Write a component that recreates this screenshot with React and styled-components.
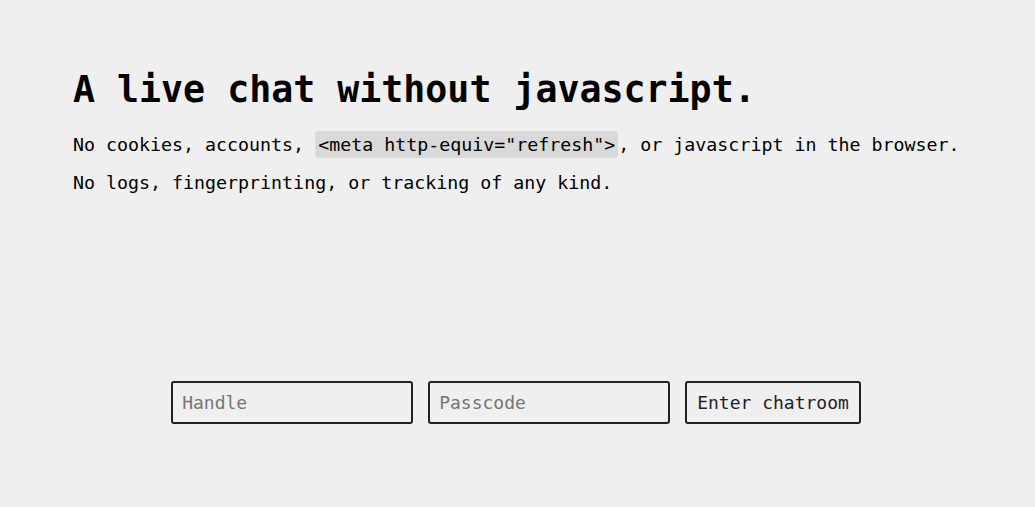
import React from "react";
import styled, { createGlobalStyle } from "styled-components";

const GlobalStyle = createGlobalStyle`
  html, body {
    margin: 0;
    padding: 0;
    background: #efefef;
  }
  body {
    font-family: "DejaVu Sans Mono", monospace;
    color: #000;
  }
`;

const App = () => {
  return (
    <>
      <GlobalStyle />
      <Page>
        <Intro>
          <Title>A live chat without javascript.</Title>
          <Text>
            No cookies, accounts, <Code>&lt;meta http-equiv="refresh"&gt;</Code>, or
            javascript in the browser.
          </Text>
          <Text>No logs, fingerprinting, or tracking of any kind.</Text>
        </Intro>
        <Form onSubmit={(e) => e.preventDefault()}>
          <Input type="text" placeholder="Handle" />
          <Input type="password" placeholder="Passcode" />
          <Button type="submit">Enter chatroom</Button>
        </Form>
      </Page>
    </>
  );
};

const Page = styled.div`
  width: 1035px;
  height: 507px;
  box-sizing: border-box;
  padding: 68px 0 0 73px;
`;

const Intro = styled.div`
  display: flex;
  flex-direction: column;
`;

const Title = styled.h1`
  margin: 0 0 14px;
  font-size: 36.6px;
  font-weight: bold;
  line-height: 44px;
`;

const Text = styled.p`
  margin: 0;
  font-size: 18.3px;
  line-height: 38px;
`;

const Code = styled.code`
  font-family: inherit;
  background: #d9d9d9;
  border-radius: 4px;
  padding: 3px 3px;
`;

const Form = styled.form`
  display: flex;
  justify-content: center;
  gap: 15px;
  margin: 179px 0 0 -76px;
`;

const Input = styled.input`
  box-sizing: border-box;
  width: 242px;
  height: 43px;
  padding: 0 9px;
  border: 2px solid #222;
  border-radius: 3px;
  background: #efefef;
  font-family: "DejaVu Sans Mono", monospace;
  font-size: 18px;
  color: #000;
  outline: none;

  &::placeholder {
    color: #757575;
  }
`;

const Button = styled.button`
  box-sizing: border-box;
  height: 43px;
  padding: 0 10px;
  border: 2px solid #222;
  border-radius: 3px;
  background: #efefef;
  font-family: "DejaVu Sans Mono", monospace;
  font-size: 18px;
  color: #222;
`;

export default App;
